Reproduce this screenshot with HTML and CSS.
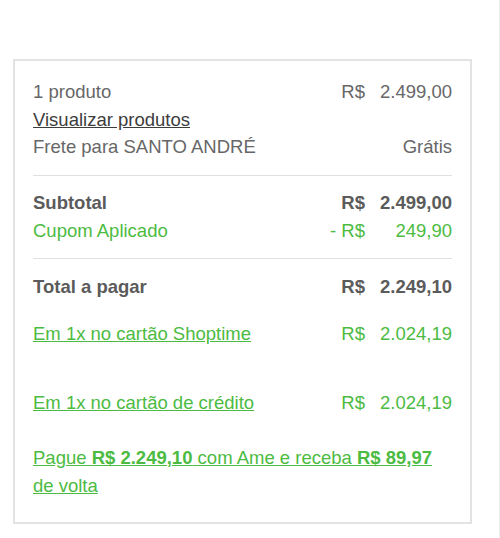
FILE: index.html
```html
<!DOCTYPE html>
<html lang="pt-BR">
<head>
<meta charset="utf-8">
<title>Resumo do pedido</title>
<link rel="stylesheet" href="styles.css">
</head>
<body>
<div class="page">
  <div class="card">
    <section class="group">
      <div class="row">
        <span>1 produto</span>
        <span class="amount"><span class="cur">R$</span><span class="val">2.499,00</span></span>
      </div>
      <div class="row"><a class="link-dark" href="#">Visualizar produtos</a></div>
      <div class="row">
        <span>Frete para SANTO ANDRÉ</span>
        <span>Grátis</span>
      </div>
    </section>
    <hr class="divider divider-first">
    <section class="group">
      <div class="row strong">
        <span>Subtotal</span>
        <span class="amount"><span class="cur">R$</span><span class="val">2.499,00</span></span>
      </div>
      <div class="row green">
        <span>Cupom Aplicado</span>
        <span class="amount"><span class="cur">- R$</span><span class="val">249,90</span></span>
      </div>
    </section>
    <hr class="divider">
    <section class="group">
      <div class="row strong total">
        <span>Total a pagar</span>
        <span class="amount"><span class="cur">R$</span><span class="val">2.249,10</span></span>
      </div>
      <div class="row green shoptime">
        <a class="link-green" href="#">Em 1x no cartão Shoptime</a>
        <span class="amount"><span class="cur">R$</span><span class="val">2.024,19</span></span>
      </div>
      <div class="row green credit">
        <a class="link-green" href="#">Em 1x no cartão de crédito</a>
        <span class="amount"><span class="cur">R$</span><span class="val">2.024,19</span></span>
      </div>
      <p class="ame"><a class="link-green" href="#">Pague <b>R$ 2.249,10</b> com Ame e receba <b>R$ 89,97</b> de volta</a></p>
    </section>
  </div>
</div>
</body>
</html>
```
FILE: styles.css
```css
* { box-sizing: border-box; }
html, body { margin: 0; padding: 0; background: #fff; }
body {
  font-family: "Liberation Sans", Arial, Helvetica, sans-serif;
  font-size: 18.5px;
  line-height: 27.5px;
  color: #676767;
}
.page {
  width: 500px;
  min-height: 538px;
  padding: 59px 0 0 13px;
  border-right: 1px solid #efefef;
}
.card {
  width: 459px;
  border: 2px solid #e3e3e3;
  padding: 17px 18px 23px 18px;
  display: flex;
  flex-direction: column;
}
.group { display: flex; flex-direction: column; }
.row {
  display: flex;
  justify-content: space-between;
  align-items: baseline;
}
.amount { display: flex; }
.val { width: 87px; text-align: right; }
.strong { font-weight: bold; color: #5b5b5b; }
.green { color: #4cbb42; }
.divider {
  border: 0;
  border-top: 1px solid #e0e0e0;
  margin: 13.5px 0 13.5px 0;
  height: 0;
}
.divider-first { margin-top: 14px; }
.total { margin-top: 1px; }
.shoptime { margin-top: 19.5px; }
.credit { margin-top: 41.5px; }
.link-dark { color: #3d3d3d; text-decoration: underline; }
.link-green { color: #4cbb42; text-decoration: underline; }
.ame { margin: 27.5px 0 0 0; }
.ame b { font-weight: bold; }
```
